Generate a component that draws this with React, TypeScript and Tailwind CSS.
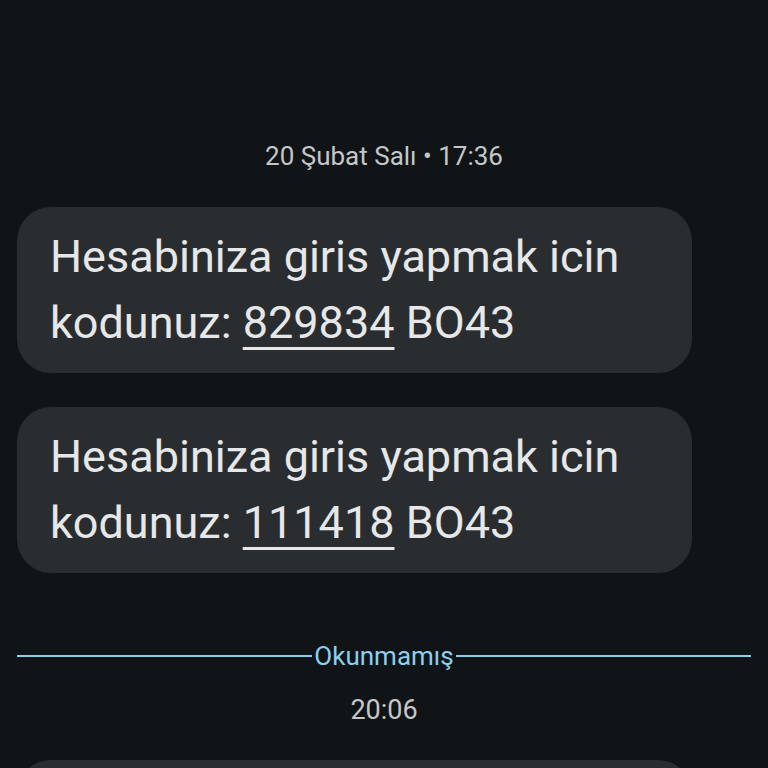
import React from 'react';

type BubbleProps = {
  code: string;
};

const Bubble = ({ code }: BubbleProps) => {
  return (
    <div className="ml-[17px] w-[675px] rounded-[34px] bg-[#2a2d30] pl-[33px] pr-6 py-[17px] text-[45px] leading-[66px] text-[#e6e7e8]">
      <div>Hesabiniza giris yapmak icin</div>
      <div>
        kodunuz:{' '}
        <span className="underline decoration-[3px] underline-offset-[9px]">{code}</span> BO43
      </div>
    </div>
  );
};

export default function App() {
  return (
    <div
      className="h-[768px] w-[768px] overflow-hidden bg-[#111417]"
      style={{ fontFamily: 'Roboto, "Noto Sans", sans-serif' }}
    >
      <div className="pt-[139px] text-center text-[26px] leading-[34px] text-[#c4c7c8]">
        20 Şubat Salı • 17:36
      </div>
      <div className="mt-[34px] flex flex-col gap-[34px]">
        <Bubble code="829834" />
        <Bubble code="111418" />
      </div>
      <div className="mt-[67px] flex items-center px-[17px]">
        <div className="h-[2px] flex-1 bg-[#8ccfee]" />
        <div className="px-[2px] text-[26px] leading-[32px] text-[#8ccfee]">Okunmamış</div>
        <div className="h-[2px] flex-1 bg-[#8ccfee]" />
      </div>
      <div className="mt-[21px] text-center text-[27px] leading-[34px] text-[#c4c7c8]">20:06</div>
      <div className="ml-[17px] mt-[33px] h-[170px] w-[675px] rounded-[34px] bg-[#2a2d30]" />
    </div>
  );
}
